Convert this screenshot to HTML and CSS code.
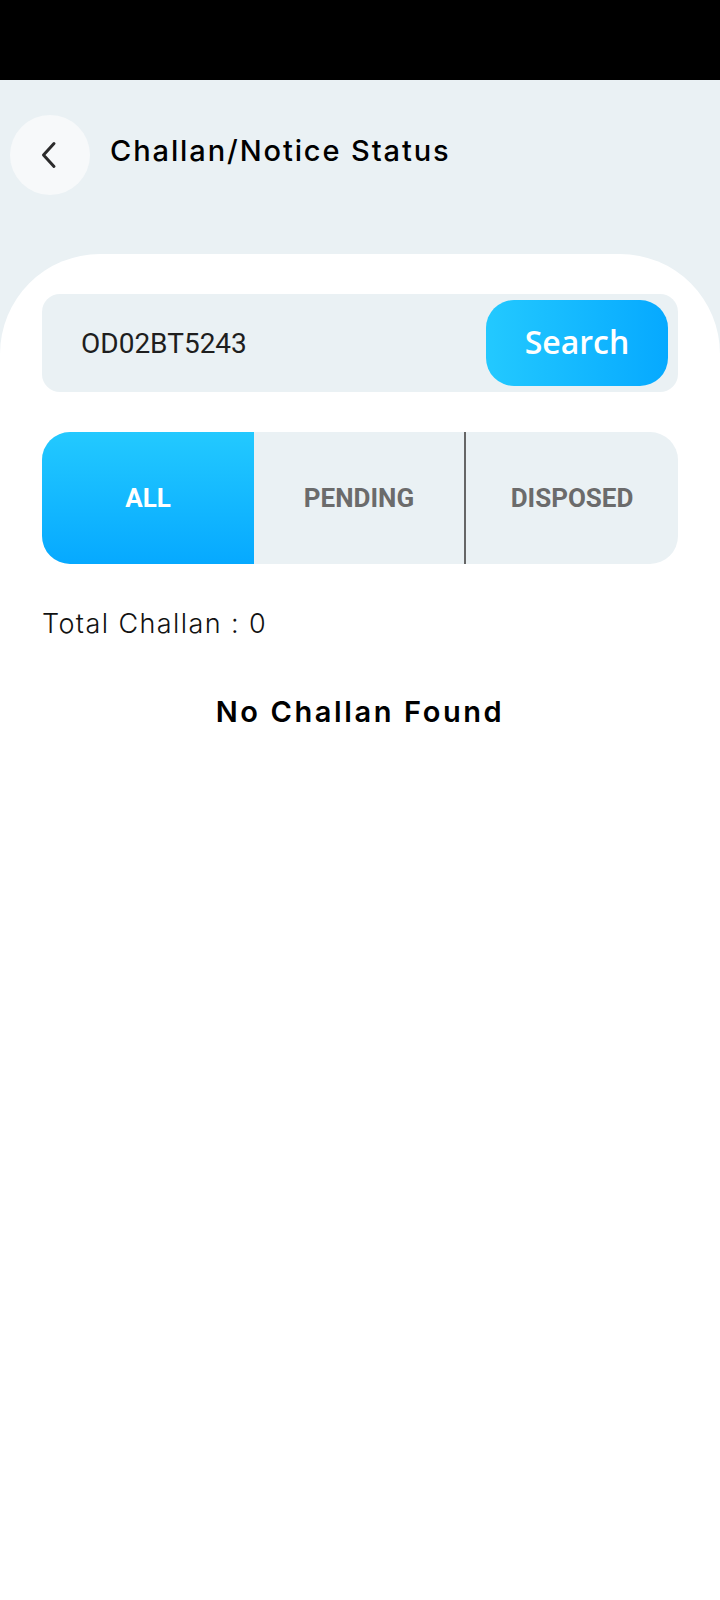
FILE: index.html
```html
<!DOCTYPE html>
<html lang="en">
<head>
<meta charset="utf-8">
<title>Challan/Notice Status</title>
<link rel="stylesheet" href="styles.css">
</head>
<body>
<div class="status-bar"></div>
<div class="app">
  <header class="header">
    <button class="back" aria-label="Back">
      <svg width="18" height="28" viewBox="0 0 18 28"><path d="M14 2.5 L3.5 14 L14 25.5" fill="none" stroke="#2b2b2b" stroke-width="3" stroke-linecap="round" stroke-linejoin="round"/></svg>
    </button>
    <h1 class="title">Challan/Notice Status</h1>
  </header>
  <main class="card">
    <div class="search-box">
      <span class="search-input">OD02BT5243</span>
      <button class="search-btn">Search</button>
    </div>
    <div class="tabs">
      <div class="tab active">ALL</div>
      <div class="tab">PENDING</div>
      <div class="tab sep">DISPOSED</div>
    </div>
    <p class="total">Total Challan : 0</p>
    <p class="empty">No Challan Found</p>
  </main>
</div>
</body>
</html>
```

FILE: styles.css
```css
html, body {
  margin: 0;
  padding: 0;
  background: #ffffff;
}
body {
  width: 720px;
  min-height: 1600px;
  font-family: "Inter", "Noto Sans", sans-serif;
}
.status-bar {
  height: 80px;
  background: #000000;
}
.app {
  background: #eaf1f4;
  min-height: 1520px;
  display: flex;
  flex-direction: column;
}
.header {
  display: flex;
  align-items: center;
  padding: 35px 0 0 10px;
  height: 80px;
  gap: 20px;
}
.back {
  width: 80px;
  height: 80px;
  border-radius: 50%;
  border: none;
  background: #f7f9fa;
  display: flex;
  align-items: center;
  justify-content: center;
  padding: 0 2px 0 0;
}
.title {
  margin: 0 0 9px 0;
  font-size: 29px;
  font-weight: 500;
  color: #000000;
  letter-spacing: 1.9px;
}
.card {
  margin-top: 59px;
  background: #ffffff;
  border-radius: 100px 100px 0 0;
  flex: 1;
  padding: 40px 42px 0 42px;
}
.search-box {
  height: 98px;
  box-sizing: border-box;
  background: #eaf1f4;
  border-radius: 18px;
  display: flex;
  align-items: center;
  justify-content: space-between;
  padding: 6px 10px 6px 39px;
}
.search-input {
  font-family: "Roboto", sans-serif;
  font-size: 28px;
  color: #1e1e1e;
}
.search-btn {
  width: 182px;
  height: 86px;
  border: none;
  border-radius: 28px;
  background: linear-gradient(90deg, #23c9ff 0%, #06a9ff 100%);
  color: #ffffff;
  font-family: "Open Sans", sans-serif;
  font-size: 32px;
  font-weight: 600;
  padding: 0 0 4px 0;
}
.tabs {
  margin-top: 40px;
  height: 132px;
  display: grid;
  grid-template-columns: 212px 210px 1fr;
  background: #eaf1f4;
  border-radius: 28px;
  overflow: hidden;
}
.tab {
  display: flex;
  align-items: center;
  justify-content: center;
  font-family: "Roboto", sans-serif;
  font-weight: 700;
  font-size: 26px;
  color: #6b6b6b;
}
.tab.active {
  background: linear-gradient(180deg, #23c9ff 0%, #06a9ff 100%);
  color: #ffffff;
}
.tab.sep {
  border-left: 2px solid #666666;
}
.total {
  margin: 43px 0 0 0;
  font-size: 27px;
  font-weight: 300;
  color: #111111;
  letter-spacing: 1.4px;
}
.empty {
  margin: 54px 0 0 0;
  text-align: center;
  font-size: 29px;
  font-weight: 600;
  color: #000000;
  letter-spacing: 2.6px;
}
```
